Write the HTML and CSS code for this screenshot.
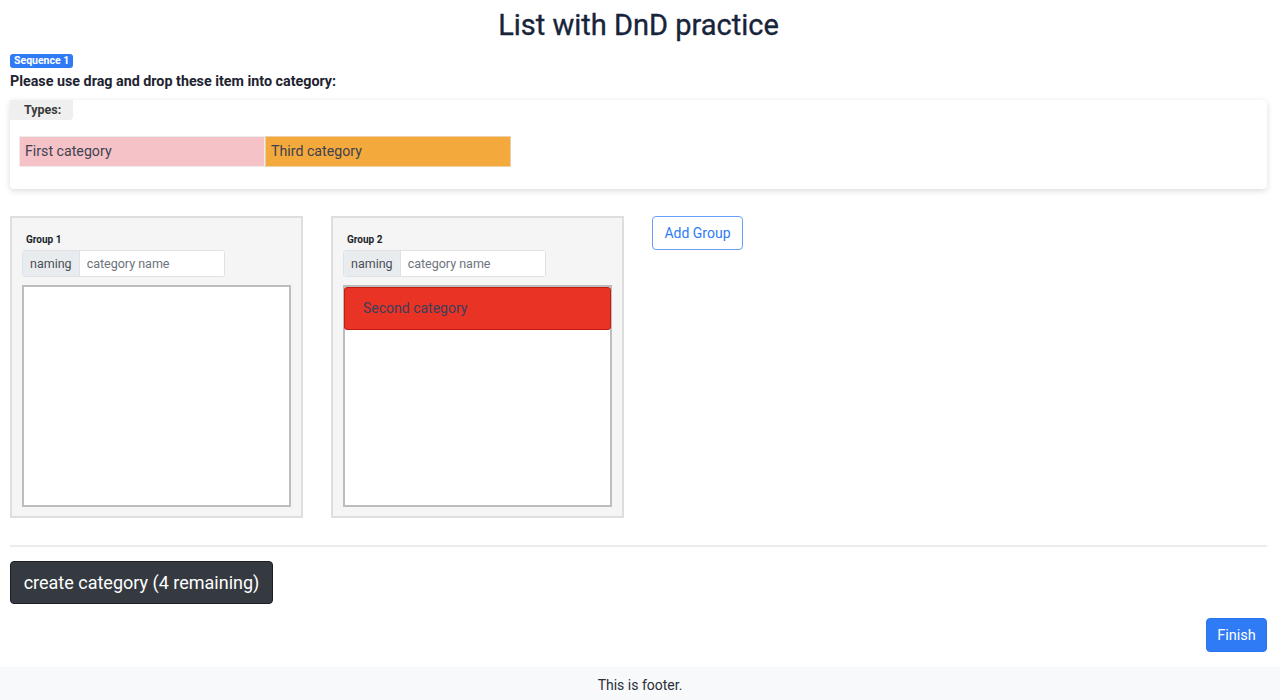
FILE: index.html
```html
<!DOCTYPE html>
<html lang="en">
<head>
<meta charset="utf-8">
<title>List with DnD practice</title>
<link rel="stylesheet" href="styles.css">
</head>
<body>
<div class="page">
  <main class="content">
    <h1 class="title">List with DnD practice</h1>
    <div class="badge-row"><span class="badge">Sequence 1</span></div>
    <p class="instructions">Please use drag and drop these item into category:</p>

    <section class="types-card">
      <div class="types-tab">Types:</div>
      <div class="types-list">
        <div class="item item-pink">First category</div>
        <div class="item item-orange">Third category</div>
      </div>
    </section>

    <section class="groups">
      <div class="group">
        <div class="group-label">Group 1</div>
        <div class="input-group">
          <span class="addon">naming</span>
          <input class="field" type="text" placeholder="category name">
        </div>
        <div class="dropzone"></div>
      </div>
      <div class="group">
        <div class="group-label">Group 2</div>
        <div class="input-group">
          <span class="addon">naming</span>
          <input class="field" type="text" placeholder="category name">
        </div>
        <div class="dropzone">
          <div class="drop-item">Second category</div>
        </div>
      </div>
      <button class="btn-outline" type="button">Add Group</button>
    </section>

    <hr class="divider">

    <button class="btn-dark" type="button">create category (4 remaining)</button>

    <div class="finish-row">
      <button class="btn-primary" type="button">Finish</button>
    </div>
  </main>
  <footer class="footer">This is footer.</footer>
</div>
</body>
</html>
```

FILE: styles.css
```css
* { box-sizing: border-box; }

html, body {
  margin: 0;
  padding: 0;
  background: #fff;
}

body {
  font-family: Roboto, "Liberation Sans", Arial, sans-serif;
  color: #212529;
  font-size: 14px;
}

.content {
  padding: 0 13px 0 10px;
}

.title {
  margin: 0;
  padding-top: 8px;
  height: 53px;
  text-align: center;
  font-size: 29px;
  font-weight: 400;
  line-height: 34px;
  color: #17243a;
  -webkit-text-stroke: 0.35px #17243a;
}

.badge-row {
  display: flex;
  height: 16px;
  padding-top: 1px;
}

.badge {
  background: #2f7bf5;
  color: #fff;
  font-size: 10.5px;
  font-weight: 700;
  line-height: 14px;
  height: 14px;
  padding: 0 4px;
  border-radius: 3px;
}

.instructions {
  margin: 2px 0 0;
  font-size: 14.3px;
  font-weight: 700;
  line-height: 20px;
  color: #1e2430;
}

.types-card {
  margin-top: 9px;
  background: #fff;
  border-radius: 4px;
  box-shadow: 0 2px 6px rgba(0, 0, 0, 0.14);
  height: 89px;
}

.types-tab {
  display: inline-block;
  background: #efefef;
  font-size: 12.5px;
  font-weight: 700;
  color: #3a3a3a;
  line-height: 20px;
  width: 63px;
  padding-left: 14px;
  border-radius: 0 0 4px 0;
}

.types-list {
  display: flex;
  margin: 16px 0 0 9px;
}

.item {
  width: 246px;
  height: 31px;
  line-height: 29px;
  padding-left: 5px;
  font-size: 14.2px;
  color: #3d4250;
  border: 1px solid #ececec;
}

.item-pink { background: #f5c2c8; }
.item-orange { background: #f3a93c; border-color: #ebd0a8; }

.groups {
  display: flex;
  align-items: flex-start;
  gap: 28px;
  margin-top: 27px;
}

.group {
  width: 293px;
  height: 302px;
  background: #f5f5f5;
  border: 2px solid #dedede;
  padding: 15px 10px 10px 10px;
}

.group-label {
  font-size: 10px;
  font-weight: 700;
  color: #1a1f2b;
  line-height: 14px;
  padding-left: 4px;
}

.input-group {
  display: flex;
  width: 203px;
  height: 27px;
  margin-top: 3px;
  border: 1px solid #dee2e6;
  border-radius: 3px;
  overflow: hidden;
  background: #fff;
}

.addon {
  background: #e9ecef;
  border-right: 1px solid #dee2e6;
  font-size: 12.5px;
  color: #494f57;
  line-height: 25px;
  padding: 0 7px;
}

.field {
  flex: 1;
  min-width: 0;
  border: 0;
  outline: 0;
  padding: 0 7px;
  font-family: inherit;
  font-size: 12.5px;
  color: #495057;
  background: #fff;
}

.field::placeholder { color: #6c737b; }

.dropzone {
  margin-top: 8px;
  height: 222px;
  background: #fff;
  border: 2px solid #bdbdbd;
  padding: 0;
}

.drop-item {
  height: 43px;
  margin: 0 -1px;
  background: #e93325;
  border: 1px solid #c41e14;
  border-radius: 3px;
  color: #3b3f5c;
  font-size: 14px;
  line-height: 41px;
  padding-left: 18px;
}

.btn-outline {
  height: 34px;
  width: 91px;
  background: #fff;
  border: 1px solid #6a9ff7;
  border-radius: 4px;
  color: #2f7bf5;
  font-family: inherit;
  font-size: 14px;
  padding: 0;
}

.divider {
  margin: 27px 0 14px;
  border: 0;
  border-top: 2px solid #ececec;
}

.btn-dark {
  display: block;
  height: 43px;
  width: 263px;
  background: #343a40;
  border: 1px solid #1c2026;
  border-radius: 4px;
  color: #fff;
  font-family: inherit;
  font-size: 18px;
  padding: 0;
}

.finish-row {
  display: flex;
  justify-content: flex-end;
  margin-top: 14px;
  padding-bottom: 15px;
}

.btn-primary {
  height: 34px;
  width: 61px;
  background: #2f7bf5;
  border: 1px solid #2a74ee;
  border-radius: 4px;
  color: #fff;
  font-family: inherit;
  font-size: 14.5px;
  padding: 0;
}

.footer {
  height: 33px;
  background: #f8f9fa;
  text-align: center;
  line-height: 36px;
  font-size: 14px;
  color: #2a2f38;
}
```
